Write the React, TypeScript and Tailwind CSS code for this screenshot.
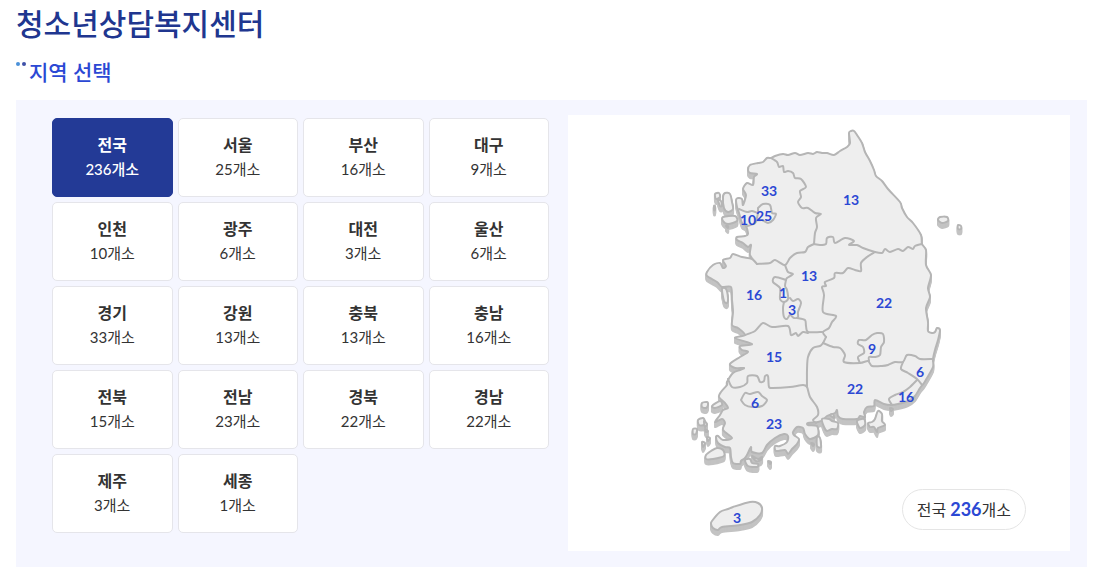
import { useState } from 'react';

interface Region {
  name: string;
  count: number;
  x?: number;
  y?: number;
}

// x and y are the centre of the count on the map
const regions: Region[] = [
  { name: '전국', count: 236 },
  { name: '서울', count: 25, x: 764, y: 216 },
  { name: '부산', count: 16, x: 906, y: 397 },
  { name: '대구', count: 9, x: 872, y: 349 },
  { name: '인천', count: 10, x: 748, y: 220 },
  { name: '광주', count: 6, x: 755, y: 403 },
  { name: '대전', count: 3, x: 792, y: 310 },
  { name: '울산', count: 6, x: 920, y: 372 },
  { name: '경기', count: 33, x: 769, y: 191 },
  { name: '강원', count: 13, x: 851, y: 200 },
  { name: '충북', count: 13, x: 809, y: 276 },
  { name: '충남', count: 16, x: 754, y: 295 },
  { name: '전북', count: 15, x: 774, y: 357 },
  { name: '전남', count: 23, x: 774, y: 424 },
  { name: '경북', count: 22, x: 884, y: 303 },
  { name: '경남', count: 22, x: 855, y: 389 },
  { name: '제주', count: 3, x: 737, y: 518 },
  { name: '세종', count: 1, x: 783, y: 293 },
];

// Turns a list of points into a path with rounded corners
function curve(points: string, closed = false) {
  const p = points.split(' ').map((pair) => pair.split(',').map(Number));
  const n = p.length;
  const at = (i: number) => (closed ? p[(i + n) % n] : p[Math.max(0, Math.min(n - 1, i))]);
  let d = `M${p[0][0]} ${p[0][1]}`;
  for (let i = 0; i < (closed ? n : n - 1); i++) {
    const [a, b, c, e] = [at(i - 1), at(i), at(i + 1), at(i + 2)];
    d += `C${b[0] + (c[0] - a[0]) / 7} ${b[1] + (c[1] - a[1]) / 7} ${c[0] - (e[0] - b[0]) / 7} ${
      c[1] - (e[1] - b[1]) / 7
    } ${c[0]} ${c[1]}`;
  }
  return closed ? `${d}Z` : d;
}

const land = [
  // 본토
  '771,158 775,156 783,154 788,155 795,153 800,155 808,153 813,154 817,152 822,153 827,153 834,155 840,151 847,147 850,143 849,133 851,131 854,131 857,135 862,143 865,152 870,161 874,170 876,176 882,181 888,189 900,202 902,208 907,217 913,223 921,235 922,244 926,250 926,265 931,275 928,288 930,297 926,308 928,322 928,331 932,333 935,332 937,328 940,330 938,340 935,350 933,359 933,367 927,378 924,383 920,388 915,396 908,401 898,404 891,405 884,404 875,400 874,406 867,407 864,412 865,417 860,416 857,419 843,419 838,416 837,410 835,413 827,416 823,420 818,422 808,423 808,425 817,426 818,435 810,439 805,434 803,428 797,427 793,432 794,435 799,439 797,444 792,449 788,454 785,450 776,451 775,446 780,446 787,442 788,436 784,434 775,438 767,445 762,453 752,452 751,447 748,453 745,458 741,461 740,464 733,463 731,457 730,448 725,447 718,443 716,437 718,436 723,440 732,438 723,430 725,423 722,419 715,422 720,415 723,410 728,408 725,403 719,397 721,392 727,385 727,382 733,373 740,370 744,368 735,368 730,364 740,357 748,352 742,350 740,346 752,344 735,338 745,335 738,328 732,325 733,312 732,300 731,287 722,287 717,282 707,276 707,272 713,265 720,263 723,268 726,266 723,260 730,258 733,254 742,257 752,259 757,264 750,255 751,245 748,247 743,243 737,240 737,237 745,236 748,234 746,226 742,223 739,213 737,207 736,200 738,198 742,199 743,205 746,195 743,189 747,183 753,185 754,177 757,174 750,173 748,170 750,165 758,163 763,162 767,158',
  // 제주
  '711,524 712,521 720,512 728,509 733,507 750,502 758,503 762,508 760,515 752,522 740,525 722,527 718,530 713,528',
  // 섬
  '725,193 730,194 732,202 733,209 728,212 724,208 723,197',
  '715,194 719,193 720,197 716,199',
  '718,200 721,201 722,206 720,206',
  '714,206 715,206 715,210 714,210',
  '723,217 735,216 737,221 728,224 723,221',
  '726,226 728,226 728,228',
  '722,289 726,289 728,298 727,303 724,301',
  '702,403 707,402 708,405 706,408 702,407',
  '712,406 720,401 722,405 715,408',
  '698,420 703,418 705,422 704,425 699,425',
  '693,429 697,429 696,434 693,434',
  '705,429 708,431 706,432',
  '704,421 707,424 705,427',
  '707,437 710,438 708,441',
  '702,442 705,443 703,447',
  '706,455 711,451 717,448 723,450 724,456 713,459 706,459',
  '745,460 750,459 752,463 758,464 757,467 748,466',
  '752,456 758,459 762,457 761,460 756,461',
  '768,461 771,462 770,464',
  '817,437 820,438 821,447 817,446',
  '811,443 814,444 813,446',
  '822,419 829,419 832,421 838,423 837,429 832,429 827,431 824,427',
  '830,415 833,414 834,418',
  '868,423 872,422 875,419 878,411 882,414 882,421 885,425 878,428 877,432 874,427 870,427',
  '857,421 864,419 865,425 860,428',
  '890,408 893,409 891,411',
  '938,220 940,217 947,217 948,221 942,223',
  '958,225 961,226 961,229 958,229',
].map((points) => curve(points, true));

const borders = [
  // 경기 - 강원
  '771,158 777,162 779,167 783,166 784,172 788,171 793,173 795,178 801,179 806,187 800,191 801,197 798,202 802,208 808,208 815,213 821,214 816,218 817,227 815,233 814,244',
  // 경기 남부
  '814,244 808,247 805,252 797,253 790,258 785,265 775,260 770,263 757,264',
  // 강원 남부
  '814,244 820,245 826,244 827,238 833,237 835,243 845,238 854,241 849,245 857,245 863,248 875,252 882,253 885,249 890,252 898,249 903,251 908,247 913,249 915,246 922,244',
  // 충북 - 경북
  '875,252 867,257 861,263 861,271 855,270 848,268 843,273 835,273 834,278 825,282 826,286 822,287 824,295 823,312 836,316 832,322 829,328 823,332 826,337',
  // 충남 - 충북
  '785,265 788,272 793,274 787,278 786,280',
  '797,318 805,320 806,326 808,332 820,332 823,332',
  // 충남 - 전북
  '745,335 755,331 763,323 772,327 788,326 791,335 796,333 798,336 803,332 808,333',
  // 세종, 대전
  '786,280 775,277 773,282 780,288 780,299 784,302 788,299 787,290 785,286 786,280',
  '784,302 783,308 784,317 787,319 790,315 794,318 798,317 798,312 801,303 798,299 793,301 790,298',
  // 전북 - 경남
  '826,337 823,343 820,346 813,348 808,357 807,370 807,387',
  // 전북 - 전남
  '728,379 732,387 740,387 747,383 748,376 757,376 760,382 764,381 765,376 768,376 769,387 773,388 790,387 803,385 807,387 810,397 817,407 818,415 813,420 816,423',
  // 경북 - 경남
  '823,343 833,347 840,348 845,355 844,362 860,363 868,361 872,366 882,366 888,365 895,362 903,362 907,355 915,356 920,359 933,359',
  // 대구
  '860,363 858,357 864,353 863,347 858,344 859,340 866,340 872,335 877,333 883,334 884,342 881,347 880,355 875,357 869,357 869,361',
  // 울산, 부산
  '903,362 901,369 908,373 917,379 922,385',
  '917,380 910,387 903,392 895,395 889,399 892,405',
  // 서울, 인천
  '758,208 763,204 770,205 772,213 776,214 773,220 768,223 762,220 757,220 758,213 758,208',
  '739,209 747,212 752,211 758,213',
  '757,220 754,224 747,226',
  // 광주
  '741,400 745,393 750,394 758,392 762,396 767,400 762,406 752,407 745,405 741,400',
].map((points) => curve(points));

const depths = [5, 4, 3, 2, 1];

function KoreaMap() {
  return (
    <svg
      viewBox="568 115 502 436"
      className="block w-full h-auto"
      role="img"
      aria-label="지역별 청소년상담복지센터 수"
    >
      <g strokeWidth="2" strokeLinejoin="round" strokeLinecap="round">
        {depths.map((depth) => (
          <g key={depth} transform={`translate(0 ${depth})`} fill="#c3c3c3" stroke="#c3c3c3">
            {land.map((d) => (
              <path key={d} d={d} />
            ))}
          </g>
        ))}
        <g fill="#eeeeee" stroke="#b5b5b5">
          {land.map((d) => (
            <path key={d} d={d} />
          ))}
        </g>
        <g fill="none" stroke="#b5b5b5">
          {borders.map((d) => (
            <path key={d} d={d} />
          ))}
        </g>
      </g>
      <g className="text-[14px] font-bold" fill="#2b48d4" textAnchor="middle">
        {regions
          .filter((region) => region.x)
          .map((region) => (
            <text key={region.name} x={region.x} y={(region.y ?? 0) + 5}>
              {region.count}
            </text>
          ))}
      </g>
    </svg>
  );
}

export default function App() {
  const [selected, setSelected] = useState<string>('전국');
  const current = regions.find((region) => region.name === selected) ?? regions[0];

  return (
    <main className="bg-white pl-4 pr-[13px] pt-[3px] pb-2 font-[Lato,'Noto_Sans_CJK_KR',sans-serif] text-[#333333]">
      <h1 className="text-[30px] leading-10 font-medium text-[#20368f]">청소년상담복지센터</h1>

      <h2 className="mt-[13px] flex text-[21px] leading-8 font-medium text-[#2b48d4]">
        <span className="mt-[6px] mr-[3px] flex gap-[2px]">
          <span className="size-1 rounded-full bg-[#4a90d9]" />
          <span className="size-1 rounded-full bg-[#3f51a8]" />
        </span>
        지역 선택
      </h2>

      <section className="mt-3 grid grid-cols-[497fr_502fr] items-start gap-[19px] bg-[#f5f6ff] pt-[15px] pr-[17px] pb-4 pl-9">
        <ul className="mt-[3px] grid grid-cols-4 gap-[5px]">
          {regions.map((region) => (
            <li key={region.name}>
              <button
                type="button"
                onClick={() => setSelected(region.name)}
                className={`flex min-h-[79px] w-full cursor-pointer flex-col items-center justify-center rounded-[5px] border pb-[2px] text-[15px] leading-6 ${
                  region.name === selected
                    ? 'border-[#233a96] bg-[#233a96] font-medium text-white'
                    : 'border-[#e5e5ea] bg-white'
                }`}
              >
                <strong className="text-[16px] font-bold">{region.name}</strong>
                <span>{region.count}개소</span>
              </button>
            </li>
          ))}
        </ul>

        <div className="relative bg-white">
          <KoreaMap />
          <p className="absolute right-11 bottom-[21px] rounded-full border border-[#e5e5e5] bg-white px-[14px] text-[16px] leading-[38px]">
            {current.name} <strong className="text-[18px] font-bold text-[#2b48d4]">{current.count}</strong>개소
          </p>
        </div>
      </section>
    </main>
  );
}
